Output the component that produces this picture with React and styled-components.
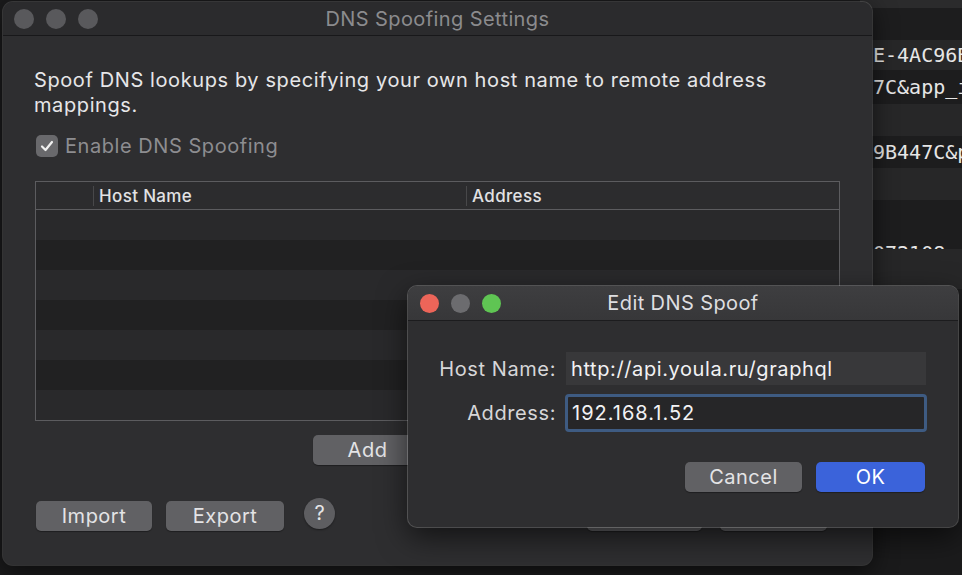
import React from 'react';
import styled, { createGlobalStyle } from 'styled-components';

const GlobalStyle = createGlobalStyle`
  html, body {
    margin: 0;
    padding: 0;
    background: #1b1b1c;
  }
  body {
    font-family: Inter, "Noto Sans", sans-serif;
    -webkit-font-smoothing: antialiased;
  }
`;

const Desktop = styled.div`
  position: relative;
  width: 962px;
  height: 575px;
  overflow: hidden;
  background: #1b1b1c;
  letter-spacing: 0.5px;
`;

/* window of the app behind the dialogs */
const BackWindow = styled.div`
  position: absolute;
  left: 860px;
  top: 0;
  width: 120px;
  height: 300px;
  display: flex;
  flex-direction: column;
  background: #1d1d1e;
`;

const BackTopBar = styled.div`
  height: 8px;
  background: #2b2b2c;
`;

const BackRow = styled.div`
  height: ${p => p.$h || 32}px;
  flex-shrink: 0;
  display: flex;
  align-items: ${p => (p.$cut ? 'flex-start' : 'center')};
  padding-left: 13px;
  padding-top: ${p => (p.$cut ? 5 : 0)}px;
  box-sizing: border-box;
  overflow: hidden;
  background: ${p => (p.$alt ? '#272728' : '#1d1d1e')};
  font-family: "DejaVu Sans Mono", monospace;
  font-size: 20px;
  line-height: 24px;
  letter-spacing: 0;
  color: #e6e6e6;
  white-space: nowrap;
`;

/* main settings window */
const MainWindow = styled.div`
  position: absolute;
  left: 3px;
  top: 2px;
  width: 869px;
  height: 563px;
  display: flex;
  flex-direction: column;
  background: #2e2e30;
  border-radius: 10px;
  box-shadow: 0 0 0 1px rgba(255, 255, 255, 0.14), 0 6px 24px rgba(0, 0, 0, 0.6);
  overflow: hidden;
`;

const TitleBar = styled.div`
  height: 33px;
  flex-shrink: 0;
  display: grid;
  grid-template-columns: 1fr auto 1fr;
  align-items: center;
  padding: 0 ${p => p.$pad}px;
  background: ${p => p.$bg};
  border-bottom: 1px solid ${p => p.$line};
`;

const Lights = styled.div`
  display: flex;
  gap: ${p => p.$gap}px;
`;

const Light = styled.span`
  width: ${p => p.$size}px;
  height: ${p => p.$size}px;
  border-radius: 50%;
  background: ${p => p.$color};
`;

const WindowTitle = styled.div`
  font-size: 20px;
  letter-spacing: 0.4px;
  color: ${p => p.$color};
`;

const Body = styled.div`
  flex: 1;
  display: flex;
  flex-direction: column;
  padding: 32px 32px 0 31px;
`;

const Description = styled.p`
  margin: 0;
  font-size: 20px;
  line-height: 25px;
  letter-spacing: 0.6px;
  color: #e6e6e8;
`;

const CheckRow = styled.label`
  display: flex;
  align-items: center;
  gap: 7px;
  margin: 15px 0 0 2px;
  height: 26px;
  font-size: 20px;
  letter-spacing: 0.55px;
  color: #8d8d90;
`;

const CheckBox = styled.span`
  width: 22px;
  height: 22px;
  border-radius: 5px;
  background: #69696c;
  display: flex;
  align-items: center;
  justify-content: center;
`;

const Table = styled.div`
  margin: 22px 0 0 1px;
  width: 805px;
  height: 240px;
  box-sizing: border-box;
  border: 1px solid #5c5c5f;
  display: flex;
  flex-direction: column;
`;

const HeaderRow = styled.div`
  height: 27px;
  flex-shrink: 0;
  display: grid;
  grid-template-columns: 57px 373px 1fr;
  background: #2c2c2e;
  border-bottom: 1px solid #5c5c5f;
`;

const HeaderCell = styled.div`
  display: flex;
  align-items: center;
  padding-left: 5px;
  font-size: 17px;
  font-weight: 500;
  letter-spacing: 0.35px;
  color: #e2e2e4;
  border-left: ${p => (p.$first ? 'none' : '1px solid #48484a')};
  margin: 4px 0;
`;

const DataRow = styled.div`
  height: 30px;
  flex-shrink: 0;
  background: ${p => (p.$alt ? '#212122' : '#29292b')};
`;

const ButtonRow = styled.div`
  display: flex;
  gap: 14px;
  justify-content: ${p => p.$justify || 'flex-start'};
  align-items: center;
  margin-top: ${p => p.$top}px;
  width: ${p => (p.$width ? `${p.$width}px` : 'auto')};
  padding: ${p => p.$pad || '0'};
`;

const Button = styled.button`
  width: ${p => p.$w}px;
  height: 30px;
  border: none;
  border-radius: 5px;
  background: ${p => (p.$primary ? '#3b63da' : '#616164')};
  box-shadow: 0 1px 1px rgba(0, 0, 0, 0.35);
  font-family: inherit;
  font-size: 20px;
  letter-spacing: 0.5px;
  color: ${p => (p.$primary ? '#ffffff' : '#e4e4e6')};
  padding: 0;
`;

const HelpButton = styled.button`
  width: 31px;
  height: 31px;
  border-radius: 50%;
  border: none;
  margin: -6px 0 0 6px;
  background: #5e5e61;
  box-shadow: 0 1px 2px rgba(0, 0, 0, 0.4);
  font-family: inherit;
  font-size: 20px;
  color: #e6e6e8;
  padding: 0;
`;

const Spacer = styled.div`
  flex: 1;
`;

/* edit dialog on top */
const Dialog = styled.div`
  position: absolute;
  left: 408px;
  top: 286px;
  width: 550px;
  height: 241px;
  display: flex;
  flex-direction: column;
  background: #2e2e30;
  border-radius: 9px;
  box-shadow: 0 0 0 1px rgba(255, 255, 255, 0.22), 0 10px 30px rgba(0, 0, 0, 0.6);
  overflow: hidden;
`;

const DialogTitleBar = styled(TitleBar)`
  height: 34px;
  background: linear-gradient(#3e3e40, #373739);
`;

const Form = styled.div`
  display: grid;
  grid-template-columns: 148px 360px;
  column-gap: 10px;
  row-gap: 9px;
  align-items: center;
  padding-top: 31px;
`;

const FieldLabel = styled.div`
  text-align: right;
  font-size: 20px;
  letter-spacing: 0.6px;
  color: #d6d6d8;
`;

const Field = styled.div`
  height: ${p => (p.$focus ? 38 : 33)}px;
  box-sizing: border-box;
  display: flex;
  align-items: center;
  padding-left: ${p => (p.$focus ? 4 : 5)}px;
  margin-left: ${p => (p.$focus ? -1 : 0)}px;
  margin-right: ${p => (p.$focus ? -1 : 0)}px;
  background: ${p => (p.$focus ? '#262628' : '#38383a')};
  border: ${p => (p.$focus ? '3px solid #3e5b82' : 'none')};
  border-radius: ${p => (p.$focus ? 4 : 0)}px;
  font-size: 20px;
  letter-spacing: ${p => (p.$focus ? 1 : 0.6)}px;
  color: #f2f2f4;
  white-space: nowrap;
`;

const Check = () => (
  <svg width="16" height="16" viewBox="0 0 16 16">
    <path d="M3 8.5 L6.5 12 L13 4" fill="none" stroke="#f0f0f0" strokeWidth="2.2" strokeLinecap="round" strokeLinejoin="round" />
  </svg>
);

const backRows = [
  { text: '' },
  { text: 'E-4AC96B', alt: true, h: 30 },
  { text: '7C&app_id', h: 34 },
  { text: '', alt: true },
  { text: '9B447C&p' },
  { text: '', alt: true },
  { text: '', h: 36 },
  { text: '072108-a', h: 13, cut: true },
  { text: '', alt: true, h: 40 },
];

export default function App() {
  const rows = [0, 1, 2, 3, 4, 5, 6];
  return (
    <>
      <GlobalStyle />
      <Desktop>
        <BackWindow>
          <BackTopBar />
          {backRows.map((r, i) => (
            <BackRow key={i} $alt={r.alt} $h={r.h} $cut={r.cut}>{r.text}</BackRow>
          ))}
        </BackWindow>

        <MainWindow>
          <TitleBar $pad={11} $bg="#2b2b2d" $line="#18181a">
            <Lights $gap={12}>
              <Light $size={20} $color="#59595c" />
              <Light $size={20} $color="#59595c" />
              <Light $size={20} $color="#59595c" />
            </Lights>
            <WindowTitle $color="#8b8b8e">DNS Spoofing Settings</WindowTitle>
            <div />
          </TitleBar>
          <Body>
            <Description>
              Spoof DNS lookups by specifying your own host name to remote address mappings.
            </Description>
            <CheckRow>
              <CheckBox><Check /></CheckBox>
              Enable DNS Spoofing
            </CheckRow>
            <Table>
              <HeaderRow>
                <HeaderCell $first />
                <HeaderCell>Host Name</HeaderCell>
                <HeaderCell>Address</HeaderCell>
              </HeaderRow>
              {rows.map(i => (
                <DataRow key={i} $alt={i % 2 === 1} />
              ))}
            </Table>
            <ButtonRow $top={14} $width={807} $justify="center">
              <Button $w={110}>Add</Button>
              <Button $w={126}>Remove</Button>
            </ButtonRow>
            <ButtonRow $top={36} $pad="0 13px 0 2px">
              <Button $w={116}>Import</Button>
              <Button $w={118}>Export</Button>
              <HelpButton>?</HelpButton>
              <Spacer />
              <Button $w={115}>Cancel</Button>
              <Button $w={107} style={{ marginLeft: 4 }}>OK</Button>
            </ButtonRow>
          </Body>
        </MainWindow>

        <Dialog>
          <DialogTitleBar $pad={12} $line="#1c1c1e">
            <Lights $gap={12}>
              <Light $size={19} $color="#ec6559" />
              <Light $size={19} $color="#6c6c6f" />
              <Light $size={19} $color="#5fc553" />
            </Lights>
            <WindowTitle $color="#dedee0">Edit DNS Spoof</WindowTitle>
            <div />
          </DialogTitleBar>
          <Form>
            <FieldLabel>Host Name:</FieldLabel>
            <Field>http://api.youla.ru/graphql</Field>
            <FieldLabel>Address:</FieldLabel>
            <Field $focus>192.168.1.52</Field>
          </Form>
          <ButtonRow $top={30} $justify="flex-end" $pad="0 33px 0 0">
            <Button $w={117}>Cancel</Button>
            <Button $w={109} $primary>OK</Button>
          </ButtonRow>
        </Dialog>
      </Desktop>
    </>
  );
}
